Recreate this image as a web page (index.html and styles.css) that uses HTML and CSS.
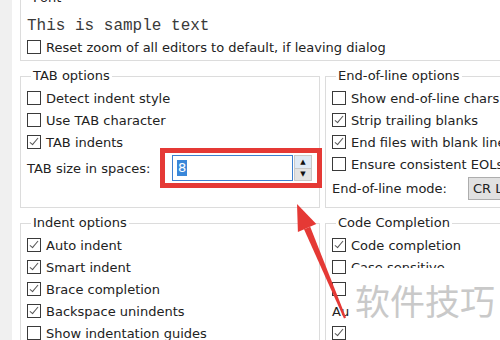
FILE: index.html
```html
<!DOCTYPE html>
<html lang="en">
<head>
    <meta charset="UTF-8">
    <title>Editor options</title>
    <link rel="stylesheet" href="styles.css">
</head>
<body>
    <div class="page">
        <div class="strip"></div>
        <div class="panel">
            <fieldset class="group font-group">
                <legend>Font</legend>
                <div class="sample">This is sample text</div>
                <div class="row"><span class="cb"></span>Reset zoom of all editors to default, if leaving dialog</div>
            </fieldset>

            <div class="columns">
                <fieldset class="group upper">
                    <legend>TAB options</legend>
                    <div class="row"><span class="cb"></span>Detect indent style</div>
                    <div class="row"><span class="cb"></span>Use TAB character</div>
                    <div class="row"><span class="cb on"></span>TAB indents</div>
                    <div class="row size-row">
                        <span class="size-label">TAB size in spaces:</span>
                        <div class="highlight">
                            <div class="spin-edit"><span class="sel">8</span></div>
                            <div class="spin-buttons">
                                <span class="spin-up">&#9650;</span>
                                <span class="spin-down">&#9660;</span>
                            </div>
                        </div>
                    </div>
                </fieldset>

                <fieldset class="group upper">
                    <legend>End-of-line options</legend>
                    <div class="row"><span class="cb"></span>Show end-of-line chars</div>
                    <div class="row"><span class="cb on"></span>Strip trailing blanks</div>
                    <div class="row"><span class="cb on"></span>End files with blank line</div>
                    <div class="row"><span class="cb"></span>Ensure consistent EOLs</div>
                    <div class="row mode-row">
                        <span class="mode-label">End-of-line mode:</span>
                        <div class="combo">CR LF</div>
                    </div>
                </fieldset>

                <fieldset class="group lower">
                    <legend>Indent options</legend>
                    <div class="row"><span class="cb on"></span>Auto indent</div>
                    <div class="row"><span class="cb on"></span>Smart indent</div>
                    <div class="row"><span class="cb on"></span>Brace completion</div>
                    <div class="row"><span class="cb on"></span>Backspace unindents</div>
                    <div class="row"><span class="cb"></span>Show indentation guides</div>
                </fieldset>

                <fieldset class="group lower">
                    <legend>Code Completion</legend>
                    <div class="row"><span class="cb on"></span>Code completion</div>
                    <div class="row"><span class="cb"></span>Case sensitive</div>
                    <div class="row"><span class="cb"></span>Complete single match</div>
                    <div class="row">Auto-completion delay</div>
                    <div class="row"><span class="cb on"></span>Show tooltips</div>
                </fieldset>
            </div>
        </div>
    </div>

    <svg class="arrow" width="500" height="340" viewBox="0 0 500 340">
        <polygon points="297,204 316.3,224.1 307.1,228 297.9,231.9" fill="#e53935"/>
        <polygon points="310.2,226.7 304,229.3 344,318.5 346,317.5" fill="#e53935"/>
    </svg>

    <div class="watermark">软件技巧</div>
</body>
</html>
```

FILE: styles.css
```css
html, body { margin: 0; padding: 0; }
body {
    width: 500px;
    height: 340px;
    overflow: hidden;
    background: #fff;
    font-family: "DejaVu Sans", sans-serif;
    font-size: 13px;
    color: #222;
    position: relative;
}
.page { display: flex; height: 340px; }
.strip { width: 12px; flex: none; background: #f0f0f0; }
.panel { padding-left: 8px; margin-top: -10px; flex: none; width: 620px; }

.group {
    margin: 0;
    padding: 0 6px;
    border: 1px solid #dcdcdc;
    box-sizing: border-box;
    min-width: 0;
}
.group legend {
    margin-left: 4px;
    padding: 0 2px;
    line-height: 16px;
}

.font-group { height: 71px; padding-top: 10px; }
.sample {
    font-family: "Liberation Mono", monospace;
    font-size: 16px;
    line-height: 20px;
    color: #3a3a3a;
}

.columns {
    display: grid;
    grid-template-columns: 300px 300px;
    column-gap: 5px;
    row-gap: 7px;
    margin-top: 7px;
}
.upper { height: 140px; padding-top: 3px; }
.lower { height: 160px; padding-top: 3px; }

.row { display: flex; align-items: center; height: 22px; white-space: nowrap; }

.cb {
    position: relative;
    width: 14px;
    height: 14px;
    box-sizing: border-box;
    border: 1px solid #3a3a3a;
    background: #fff;
    margin-right: 5px;
    flex: none;
}
.cb.on::after {
    content: "";
    position: absolute;
    left: 4px;
    top: 0px;
    width: 3px;
    height: 8px;
    border: solid #555;
    border-width: 0 1px 1px 0;
    transform: rotate(40deg);
}

.size-row { height: 30px; }
.size-label { width: 133px; flex: none; }
.highlight {
    display: flex;
    border: 5px solid #e53935;
    padding: 2px 5px 2px 7px;
    margin: -5px 0;
}
.spin-edit {
    width: 121px;
    height: 26px;
    box-sizing: border-box;
    border: 1px solid #3d7fcf;
    background: #fff;
    padding-left: 4px;
    display: flex;
    align-items: center;
}
.sel { background: #3a87d9; color: #fff; line-height: 16px; padding: 0 1px; }
.spin-buttons {
    width: 18px;
    height: 26px;
    margin-left: 1px;
    display: flex;
    flex-direction: column;
    border: 1px solid #c9c9c9;
    box-sizing: border-box;
}
.spin-buttons span {
    flex: 1;
    font-size: 7px;
    display: flex;
    align-items: center;
    justify-content: center;
    color: #111;
}
.spin-up { background: #dfeaf6; border-bottom: 1px solid #c9c9c9; }
.spin-down { background: #e3e3e3; }

.mode-row { height: 24px; margin-top: 1px; }
.mode-label { width: 136px; flex: none; }
.combo {
    height: 23px;
    box-sizing: border-box;
    width: 80px;
    border: 1px solid #adadad;
    background: #e1e1e1;
    padding-left: 4px;
    line-height: 21px;
}

.arrow { position: absolute; left: 0; top: 0; pointer-events: none; }

.watermark {
    position: absolute;
    left: 349px;
    top: 268px;
    width: 151px;
    height: 72px;
    background: #fff;
    box-sizing: border-box;
    padding: 12px 0 0 6px;
    font-family: "Noto Sans CJK SC", sans-serif;
    font-size: 35px;
    line-height: 40px;
    color: #c9c9c9;
}
```
